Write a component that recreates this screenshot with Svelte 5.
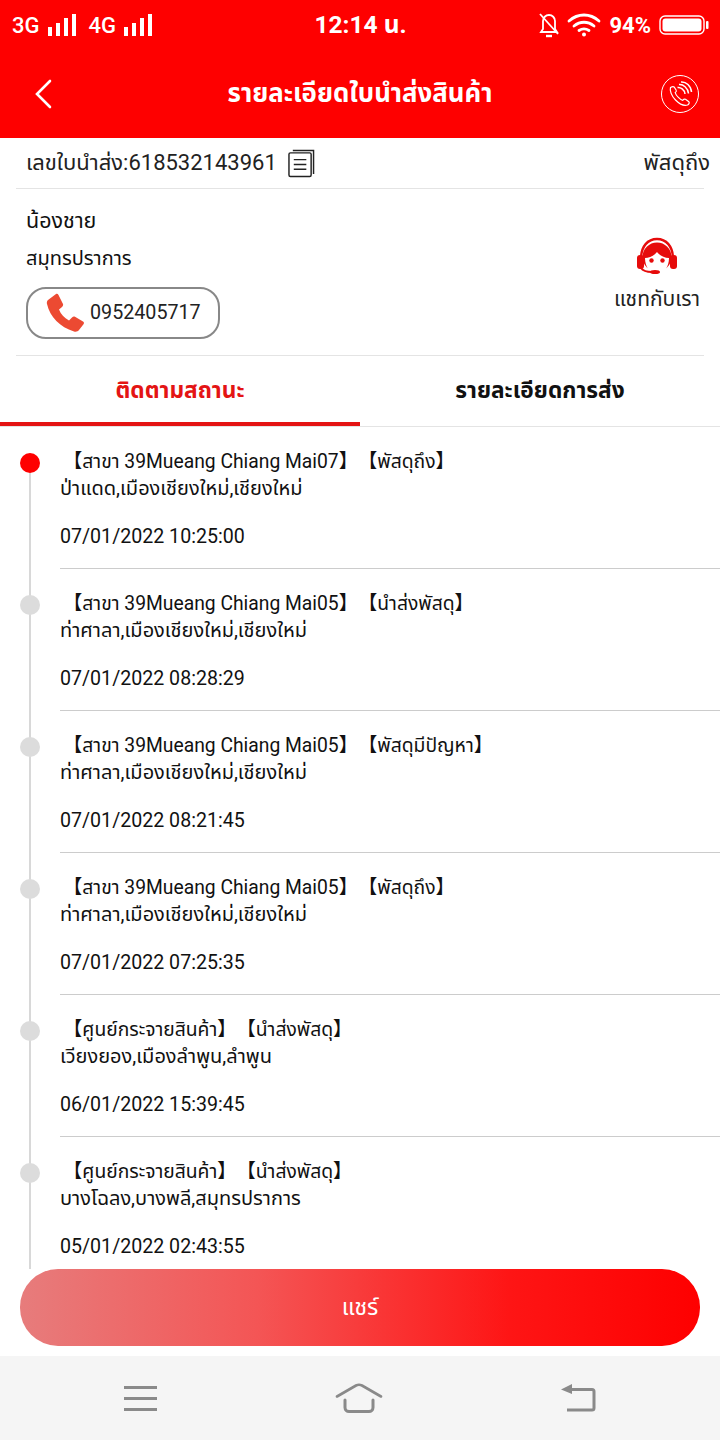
<script>
  const events = [
    { head: "【สาขา 39Mueang Chiang Mai07】【พัสดุถึง】", place: "ป่าแดด,เมืองเชียงใหม่,เชียงใหม่", time: "07/01/2022 10:25:00", active: true },
    { head: "【สาขา 39Mueang Chiang Mai05】【นำส่งพัสดุ】", place: "ท่าศาลา,เมืองเชียงใหม่,เชียงใหม่", time: "07/01/2022 08:28:29" },
    { head: "【สาขา 39Mueang Chiang Mai05】【พัสดุมีปัญหา】", place: "ท่าศาลา,เมืองเชียงใหม่,เชียงใหม่", time: "07/01/2022 08:21:45" },
    { head: "【สาขา 39Mueang Chiang Mai05】【พัสดุถึง】", place: "ท่าศาลา,เมืองเชียงใหม่,เชียงใหม่", time: "07/01/2022 07:25:35" },
    { head: "【ศูนย์กระจายสินค้า】【นำส่งพัสดุ】", place: "เวียงยอง,เมืองลำพูน,ลำพูน", time: "06/01/2022 15:39:45" },
    { head: "【ศูนย์กระจายสินค้า】【นำส่งพัสดุ】", place: "บางโฉลง,บางพลี,สมุทรปราการ", time: "05/01/2022 02:43:55" }
  ];
</script>

<div class="page">
  <header class="top">
    <div class="status">
      <div class="status-left">
        <span>3G</span>
        <svg class="bars" viewBox="0 0 30 22" width="30" height="22" fill="#fff">
          <rect x="0" y="13" width="4" height="9" /><rect x="8" y="9" width="4" height="13" /><rect x="16" y="4" width="4" height="18" /><rect x="24" y="0" width="4" height="22" />
        </svg>
        <span class="second">4G</span>
        <svg class="bars" viewBox="0 0 30 22" width="30" height="22" fill="#fff">
          <rect x="0" y="13" width="4" height="9" /><rect x="8" y="9" width="4" height="13" /><rect x="16" y="4" width="4" height="18" /><rect x="24" y="0" width="4" height="22" />
        </svg>
      </div>
      <div class="clock">12:14 น.</div>
      <div class="status-right">
        <svg viewBox="0 0 20 25" width="20" height="25" fill="none" stroke="#fff" stroke-width="1.800">
          <path d="M2 19h16l-2-3V8a6 6 0 0 0-12 0v8z" />
          <path d="M7 23h6" stroke-width="2.400" />
          <path d="M1 1l18 20" />
        </svg>
        <svg viewBox="0 0 34 24" width="34" height="24" fill="none" stroke="#fff" stroke-width="2.800" stroke-linecap="round">
          <path d="M2 8c9-8 21-8 30 0" />
          <path d="M7 13c6-5 14-5 20 0" />
          <path d="M12 17.500c3-2 7-2 10 0" />
          <circle cx="17" cy="21.500" r="2" fill="#fff" stroke="none" />
        </svg>
        <span class="pct">94%</span>
        <svg viewBox="0 0 50 20" width="50" height="20">
          <rect x="1" y="1" width="44" height="18" rx="5" fill="none" stroke="#fff" stroke-width="1.400" />
          <rect x="3.500" y="3.500" width="39" height="13" rx="3" fill="#fff" />
          <rect x="47" y="6" width="2.500" height="8" rx="1" fill="#fff" />
        </svg>
      </div>
    </div>
    <div class="nav">
      <svg class="back" viewBox="0 0 20 30" width="20" height="30" fill="none" stroke="#fff" stroke-width="2.600" stroke-linecap="round">
        <path d="M16 2L3 15l13 13" />
      </svg>
      <h1>รายละเอียดใบนำส่งสินค้า</h1>
      <svg class="call" viewBox="0 0 40 40" width="40" height="40" fill="none" stroke="#fff" stroke-width="1">
        <circle cx="20" cy="20" r="18.500" />
        <path d="M10.500 13.500c-1 3 1 8.500 5 12.500s9 6 12 5c1-.5 2.400-2 1.400-3.200l-3.400-2.500c-1-.6-2 0-2.800 1-2 0-7-5-7.500-7.800 1-.6 1.500-1.500.9-2.500l-2-3c-1-1-2.800 0-3.600.5z" stroke-width="1.200" />
        <path d="M17.500 13.500c3-.5 7 2 7.500 6.500M19 10.500c4-.5 9 3.500 9.500 9M21 8c5-.5 10 4 10.500 10" stroke-width="1.500" />
      </svg>
    </div>
  </header>

  <section class="waybill">
    <div class="code">
      <span>เลขใบนำส่ง:618532143961</span>
      <svg viewBox="0 0 28 30" width="27" height="29" fill="none" stroke="#222" stroke-width="1.500">
        <rect x="1" y="4" width="23" height="24.500" rx="1.500" />
        <path d="M6 11h13M6 16h13M6 21h13" />
        <path d="M5 1.500h21.500V26" />
      </svg>
    </div>
    <span class="state">พัสดุถึง</span>
  </section>

  <section class="contact">
    <div class="person">
      <div class="name">น้องชาย</div>
      <div class="province">สมุทรปราการ</div>
      <div class="phone">
        <svg viewBox="0 0 40 40" width="40" height="40">
          <path fill="#ec4a32" d="M2 7l8-6c1-.5 2 0 2.500 1l4.500 9c.4 1 0 2-1 3l-3 2.500c2 5 5 8 10 11l3-3c1-1 2-1.200 3-.7l8 4.700c1 .5 1.200 1.500.7 2.500l-4.700 6c-1 1.500-3 2-5 1.500C14 34 4 24 1 11c-.4-1.500 0-3 1-4z" />
        </svg>
        <span>0952405717</span>
      </div>
    </div>
    <div class="chat">
      <svg viewBox="0 0 40 42" width="40" height="42">
        <path d="M4 22C4 9 11 2 20 2s16 7 16 20" fill="none" stroke="#e60b0b" stroke-width="2.400" />
        <circle cx="20" cy="20" r="14.500" fill="#e60b0b" />
        <rect x="0" y="18" width="7" height="14" rx="3" fill="#e60b0b" />
        <rect x="33" y="18" width="7" height="14" rx="3" fill="#e60b0b" />
        <path d="M8 21c4 0 9-2 12-6 2 3 7 6 12 6 0 9-5 16-12 16S8 30 8 21z" fill="#fff" />
        <circle cx="14.500" cy="23.500" r="2.200" fill="#e60b0b" />
        <circle cx="25.500" cy="23.500" r="2.200" fill="#e60b0b" />
        <path d="M4 31c2 3 6 4 11 4" fill="none" stroke="#e60b0b" stroke-width="2" />
        <ellipse cx="18" cy="35" rx="5" ry="2" fill="#e60b0b" />
      </svg>
      <span>แชทกับเรา</span>
    </div>
  </section>

  <nav class="tabs">
    <div class="tab on">ติดตามสถานะ</div>
    <div class="tab">รายละเอียดการส่ง</div>
  </nav>

  <main class="timeline">
    {#each events as ev}
      <article class="item">
        <div class="rail">
          <span class="dot" class:active={ev.active}></span>
        </div>
        <div class="body">
          <p class="head">{ev.head}</p>
          <p class="place">{ev.place}</p>
          <p class="time">{ev.time}</p>
        </div>
      </article>
    {/each}
  </main>

  <div class="share-wrap">
    <button class="share">แชร์</button>
  </div>

  <footer class="sysnav">
    <svg viewBox="0 0 33 25" width="33" height="25" fill="#8a8a8a">
      <rect x="0" y="0" width="33" height="3" /><rect x="0" y="11" width="33" height="3" /><rect x="0" y="22" width="33" height="3" />
    </svg>
    <svg viewBox="0 0 48 30" width="48" height="30" fill="none" stroke="#8a8a8a" stroke-width="2.600" stroke-linecap="round">
      <path d="M2 13.500L21 2.500c2-1 4-1 6 0l19 11" />
      <path d="M10 17v7.500a4 4 0 0 0 4 4h20a4 4 0 0 0 4-4V17" stroke-width="3" />
    </svg>
    <svg viewBox="0 0 35 28" width="35" height="28" fill="none" stroke="#8a8a8a" stroke-width="3">
      <path d="M8 5.500h23a2 2 0 0 1 2 2v16.500a2 2 0 0 1-2 2H6" />
      <path d="M11 0v10L0 5.500z" fill="#8a8a8a" stroke="none" />
    </svg>
  </footer>
</div>

<style>
  :global(body) {
    margin: 0;
    background: #fff;
  }
  .page {
    width: 720px;
    height: 1440px;
    display: flex;
    flex-direction: column;
    overflow: hidden;
    color: #111;
    font-family: Roboto, "Noto Sans", "Noto Sans Thai", "DejaVu Sans", "Noto Sans CJK SC", sans-serif;
    text-spacing-trim: space-all;
  }
  p {
    margin: 0;
  }
  .top {
    background: #fe0000;
    color: #fff;
    height: 138px;
    flex: none;
  }
  .status {
    height: 50px;
    padding: 0 11px 0 12px;
    display: grid;
    grid-template-columns: 1fr auto 1fr;
    align-items: center;
  }
  .status-left {
    display: flex;
    align-items: center;
    gap: 8px;
    font-size: 22px;
    font-weight: 500;
  }
  .status-left .second {
    margin-left: 3px;
  }
  .clock {
    font-size: 24.500px;
    font-weight: 700;
  }
  .status-right {
    display: flex;
    align-items: center;
    justify-content: flex-end;
    gap: 8px;
  }
  .pct {
    font-size: 22px;
    font-weight: 700;
  }
  .nav {
    height: 88px;
    padding: 0 20px 4px 34px;
    display: flex;
    align-items: center;
    justify-content: space-between;
  }
  .nav h1 {
    margin: 0 0 0 6px;
    font-size: 25.800px;
    font-weight: 700;
  }
  .waybill {
    flex: none;
    height: 51px;
    box-sizing: border-box;
    margin: 0 10px 0 16px;
    padding: 0 0 0 10px;
    display: flex;
    align-items: center;
    justify-content: space-between;
    font-size: 22px;
    color: #222;
    background: linear-gradient(#e4e4e4, #e4e4e4) left bottom / calc(100% - 6px) 1px no-repeat;
  }
  .code {
    display: flex;
    align-items: center;
    gap: 11px;
  }
  .contact {
    flex: none;
    height: 167px;
    box-sizing: border-box;
    margin: 0 16px;
    padding: 0 4px 0 10px;
    display: flex;
    justify-content: space-between;
    align-items: center;
    border-bottom: 1px solid #e4e4e4;
  }
  .name {
    font-size: 21.500px;
    line-height: 28px;
    margin: 1px 0 9px;
  }
  .province {
    font-size: 20px;
    line-height: 28px;
    margin-bottom: 15px;
  }
  .phone {
    box-sizing: border-box;
    width: 194px;
    height: 52px;
    border: 2px solid #888;
    border-radius: 20px;
    padding-left: 18px;
    display: flex;
    align-items: center;
    gap: 4px;
    font-size: 19.700px;
    color: #222;
  }
  .chat {
    display: flex;
    flex-direction: column;
    align-items: center;
    gap: 5px;
    font-size: 21px;
    color: #222;
    margin-top: 8px;
  }
  .tabs {
    flex: none;
    height: 71px;
    display: flex;
    box-sizing: border-box;
    border-bottom: 1px solid #e4e4e4;
  }
  .tab {
    flex: 1;
    display: flex;
    align-items: center;
    justify-content: center;
    padding-top: 4px;
    font-size: 22.700px;
    font-weight: 700;
    color: #111;
    border-bottom: 4px solid transparent;
  }
  .tab.on {
    color: #e41414;
    border-bottom-color: #e41414;
  }
  .timeline {
    flex: 1;
    min-height: 0;
    overflow: hidden;
  }
  .item {
    display: grid;
    grid-template-columns: 60px 1fr;
    height: 142px;
  }
  .rail {
    display: flex;
    flex-direction: column;
    align-items: center;
    background: linear-gradient(#d8d8d8, #d8d8d8) center / 2px 100% no-repeat;
  }
  .item:first-child .rail {
    background-position: center 36px;
  }
  .dot {
    flex: none;
    width: 20px;
    height: 20px;
    margin-top: 26px;
    border-radius: 50%;
    background: #dcdcdc;
  }
  .dot.active {
    background: #fe0000;
  }
  .body {
    box-sizing: border-box;
    border-bottom: 1px solid #ccc;
    padding-top: 21px;
    font-size: 20px;
    line-height: 27px;
    color: #111;
  }
  .item:last-child .body {
    border-bottom: 0;
  }
  .head {
    font-size: 19.300px;
    margin-left: 3px;
  }
  .time {
    margin-top: 21px;
    font-size: 19.600px;
  }
  .share-wrap {
    flex: none;
    height: 87px;
    box-sizing: border-box;
    padding: 0 20px 10px;
  }
  .share {
    display: block;
    width: 100%;
    height: 77px;
    border: 0;
    border-radius: 38px;
    background: linear-gradient(90deg, #e77c7c, #f45555 35%, #fe1515 72%, #fe0000);
    color: #fff;
    font-family: inherit;
    font-size: 23px;
  }
  .sysnav {
    flex: none;
    height: 84px;
    background: #f5f5f5;
    display: flex;
    align-items: center;
    justify-content: space-between;
    padding: 0 124px;
  }
</style>
